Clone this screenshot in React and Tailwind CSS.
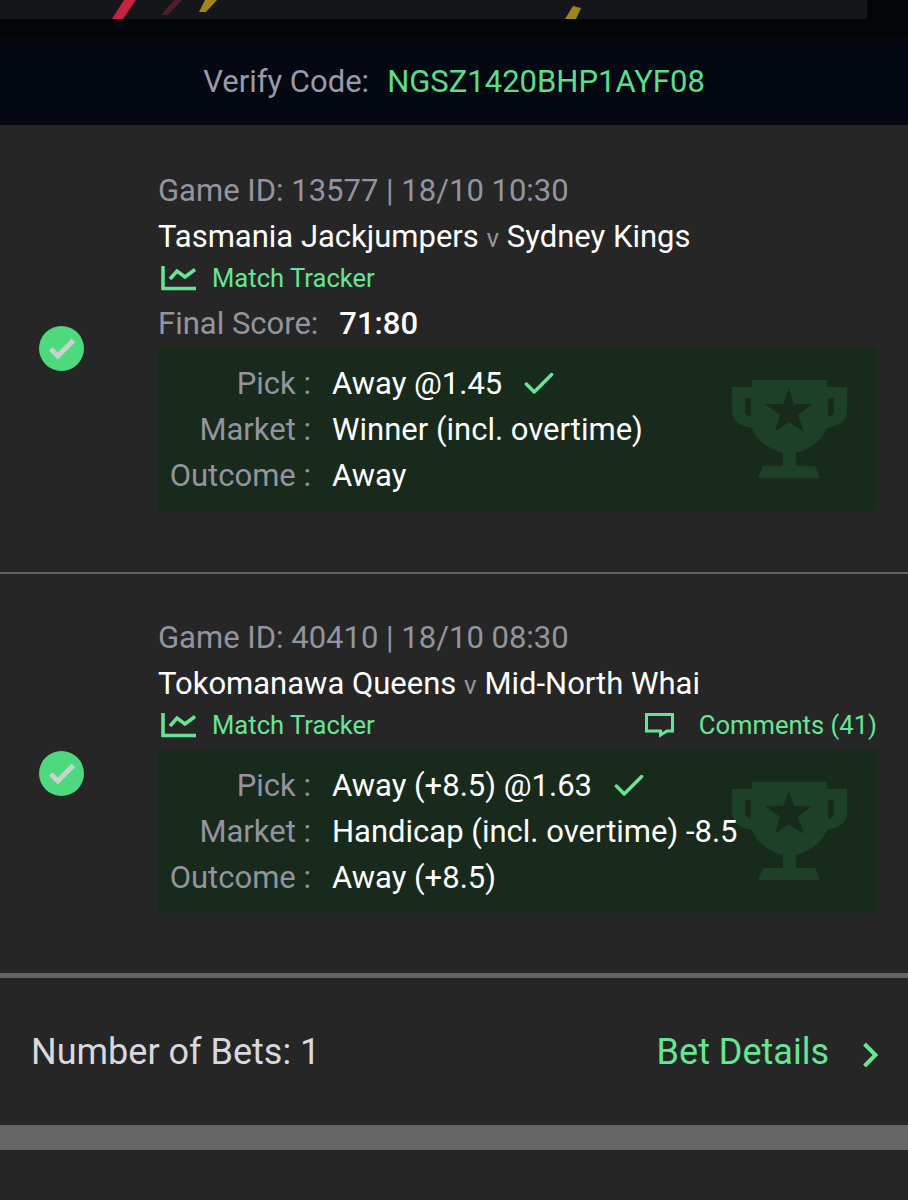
import { Check, ChevronRight } from 'lucide-react';

const TrackerIcon = () => (
    <svg width="36" height="25" viewBox="0 0 36 25" fill="none" stroke="#66e693" strokeWidth="3.5">
        <path d="M2 0 V22.5 H35" />
        <path d="M9 13 L16 5 L24 11 L34 3.5" />
    </svg>
);

const CommentIcon = () => (
    <svg width="29" height="25" viewBox="0 0 29 25" fill="none" stroke="#66e693" strokeWidth="3">
        <path d="M1.5 1.5 H27.5 V18 H22 L15.5 22 V18 H1.5 Z" />
    </svg>
);

const Trophy = () => (
    <svg
        className="absolute left-[574px] top-[33px]"
        width="115"
        height="98"
        viewBox="0 0 115 98"
    >
        <path
            fillRule="evenodd"
            fill="#1c4028"
            d="M20 0 H95 V7 H115 V30 Q115 45 95 48 Q88 66 64 73 V86 H83 L88 98 H26 L31 86 H51 V73 Q27 66 20 48 Q0 45 0 30 V7 H20 Z M13 18 V32 Q13 35 19 37 V18 Z M96 18 V37 Q102 35 102 32 V18 Z M57 9 L62 24 H80 L66 35 L72 52 L57 42 L43 52 L48 35 L33 24 H51 Z"
        />
    </svg>
);

const PickRow = ({ label, children }) => (
    <div className="flex h-[46px] items-center">
        <div className="w-[153px] shrink-0 text-right text-[#9494a0]">{label}&nbsp;:</div>
        <div className="ml-[21px] flex items-center whitespace-nowrap text-white">{children}</div>
    </div>
);

const GameSection = ({ game, home, away, comments, score, pick, market, outcome, className, contentClass }) => (
    <div className={`flex ${className}`}>
        <div className="w-[158px] shrink-0 self-center pl-[39px]">
            <div className="flex h-[45px] w-[45px] items-center justify-center rounded-full bg-[#4fd97f]">
                <Check size={34} strokeWidth={3.5} strokeLinecap="butt" strokeLinejoin="miter" color="#c9d2cc" className="shrink-0" />
            </div>
        </div>
        <div className={`w-[719px] ${contentClass}`}>
            <div className="h-[46px] pt-[1px] leading-[46px] text-[#9494a0]">{game}</div>
            <div className="h-[46px] pt-[1px] leading-[46px] text-white">
                {home} <span className="text-[26px] text-[#9494a0]">v</span> {away}
            </div>
            <div className="flex h-[38px] items-center justify-between text-[25.6px] text-[#66e693]">
                <div className="flex items-center gap-[15px]">
                    <span className="ml-[3px] mt-[1px] flex"><TrackerIcon /></span>
                    Match Tracker
                </div>
                {comments && (
                    <div className="flex items-center gap-[25px]">
                        <CommentIcon />
                        Comments ({comments})
                    </div>
                )}
            </div>
            {score ? (
                <div className="mt-[3px] flex h-[47px] items-center pt-[1px] text-[#9494a0]">
                    Final Score:
                    <span className="ml-[21px] font-medium text-white">{score}</span>
                </div>
            ) : (
                <div className="h-[5px]" />
            )}
            <div className="relative h-[164px] bg-[#172a1c] pt-[14px]">
                <Trophy />
                <div className="relative">
                    <PickRow label="Pick">
                        {pick}
                        <Check size={38} strokeWidth={2.2} color="#66e693" className="ml-[18px]" />
                    </PickRow>
                    <PickRow label="Market">{market}</PickRow>
                    <PickRow label="Outcome">{outcome}</PickRow>
                </div>
            </div>
        </div>
    </div>
);

export default function App() {
    return (
        <div className="h-[1200px] w-[908px] overflow-hidden bg-[#262626] text-[31px] font-['Roboto',sans-serif]">
            <div className="h-[38px] bg-[#030509]">
                <div className="relative h-[19px] w-[867px] bg-[#15161a]">
                    <svg className="absolute left-0 top-0" width="867" height="19" viewBox="0 0 867 19">
                        <polygon points="124,0 136,0 123,19 112,19" fill="#c4243f" />
                        <polygon points="174,0 182,0 168,15 161,15" fill="#4a1f2a" />
                        <polygon points="205,0 217,0 206,12 199,12" fill="#a3841c" />
                        <polygon points="573,6 581,8 576,19 565,19" fill="#a3841c" />
                    </svg>
                </div>
            </div>
            <div className="flex h-[87px] items-center justify-center bg-[#040813] pt-[2px]">
                <span className="text-[#9a9aa8]">Verify Code:</span>
                <span className="ml-[18px] text-[#5ade8a]">NGSZ1420BHP1AYF08</span>
            </div>
            <GameSection
                className="h-[447px]"
                contentClass="pt-[42px]"
                game="Game ID: 13577 | 18/10 10:30"
                home="Tasmania Jackjumpers"
                away="Sydney Kings"
                score="71:80"
                pick="Away @1.45"
                market="Winner (incl. overtime)"
                outcome="Away"
            />
            <div className="h-[2px] bg-[#63636b]" />
            <GameSection
                className="h-[399px]"
                contentClass="pt-[40px]"
                game="Game ID: 40410 | 18/10 08:30"
                home="Tokomanawa Queens"
                away="Mid-North Whai"
                comments={41}
                pick="Away (+8.5) @1.63"
                market="Handicap (incl. overtime) -8.5"
                outcome="Away (+8.5)"
            />
            <div className="h-[5px] bg-[#63636b]" />
            <div className="flex h-[147px] items-center justify-between pl-[31px] pr-[16px] text-[36px]">
                <span className="text-[#d8d8de]">Number of Bets: 1</span>
                <div className="flex items-center text-[#66e693]">
                    Bet Details
                    <ChevronRight size={44} strokeWidth={2.2} strokeLinecap="butt" strokeLinejoin="miter" className="ml-[19px] mt-[6px]" />
                </div>
            </div>
            <div className="h-[25px] bg-[#666668]" />
        </div>
    );
}
